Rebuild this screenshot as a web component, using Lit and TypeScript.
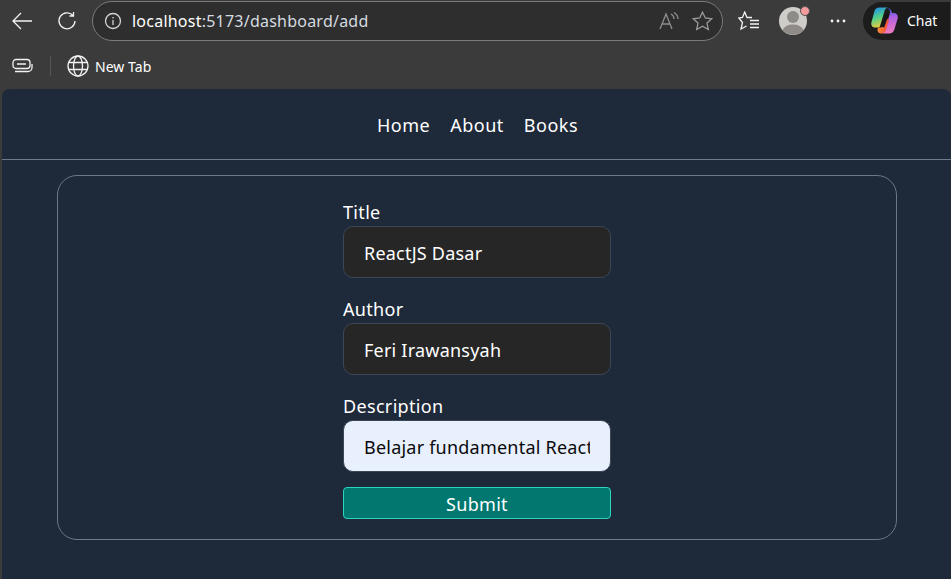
import { LitElement, html, css, svg } from "lit";
import { customElement } from "lit/decorators.js";

const stroke = (w: number, h: number, body: unknown, cls = "") => html`<svg class=${cls} width=${w} height=${h} viewBox="0 0 ${w} ${h}" fill="none" stroke="currentColor" stroke-width="1.3">${body}</svg>`;

@customElement("app-root")
export class AppRoot extends LitElement {
  static styles = css`
    :host { display: block; width: 951px; height: 579px; overflow: hidden; background: #3b3b3b; font-family: "Noto Sans", "Open Sans", sans-serif; color: #fff; }
    svg { display: block; flex: none; }
    .toolbar { height: 44px; display: flex; align-items: center; padding-left: 11px; box-sizing: border-box; padding-bottom: 3px; }
    .back { color: #f2f2f2; margin-right: 23px; }
    .reload { color: #f2f2f2; margin-right: 15px; margin-left: 1px; }
    .address { flex: none; width: 631px; height: 40px; box-sizing: border-box; border: 1px solid #7a7a7a; border-radius: 20px; background: #2e2e2e; display: flex; align-items: center; padding: 0 9px 0 11px; }
    .address .info { color: #d4d4d4; margin-right: 10px; }
    .url { flex: 1; font: 16px "Noto Sans", sans-serif; letter-spacing: 0.23px; color: #d5dbe0; white-space: nowrap; }
    .url b { font-weight: 400; color: #fff; }
    .read { color: #8f8f8f; margin-right: 13px; }
    .star { color: #9a9a9a; }
    .favs { color: #f2f2f2; margin-left: 15px; margin-right: 19px; }
    .avatar { position: relative; margin-right: 23px; width: 28px; height: 28px; flex: none; }
    .badge { position: absolute; right: -3px; top: -1px; width: 8px; height: 8px; border-radius: 50%; background: #f59b9b; border: 1px solid #555; }
    .dots { color: #f2f2f2; margin-right: 17px; }
    .chat { flex: none; width: 87px; height: 38px; border-radius: 19px 0 0 19px; background: #1c1c1c; display: flex; align-items: center; padding-left: 8px; box-sizing: border-box; gap: 9px; font: 14px "Noto Sans", sans-serif; }
    .bookmarks { height: 44px; display: flex; align-items: center; padding-left: 12px; box-sizing: border-box; font-size: 14px; letter-spacing: 0.05px; }
    .tabs-icon { color: #f2f2f2; }
    .sep { width: 1px; height: 20px; background: #555; margin: 0 16px 0 17px; }
    .globe { color: #f2f2f2; margin-right: 6px; }
    .content { margin: 1px 0 0 2px; height: 490px; background: #1e2939; border-radius: 8px 8px 0 0; box-sizing: border-box; }
    nav { height: 71px; box-sizing: border-box; border-bottom: 1px solid #6f7c90; display: flex; justify-content: center; align-items: center; gap: 20px; font-size: 18px; letter-spacing: 0.5px; padding: 2px 0 0 2px; }
    .card { width: 840px; height: 365px; box-sizing: border-box; margin: 15px 0 0 55px; border: 1px solid #6a788c; border-radius: 20px; padding: 24px 0 0 285px; }
    form { width: 268px; display: flex; flex-direction: column; }
    label { font-size: 18px; line-height: 24px; height: 26px; letter-spacing: 0.33px; }
    input { height: 52px; box-sizing: border-box; border: 1px solid #3d4656; border-radius: 10px; background: #262626; color: #fff; padding: 2px 20px 0 20px; font: 18px "Noto Sans", sans-serif; margin: 0 0 19px; letter-spacing: 0.22px; outline: none; width: 100%; }
    input.filled { background: #e8f0fe; color: #0a0a0a; margin-bottom: 15px; }
    button { height: 32px; box-sizing: border-box; border: 1px solid #2dd4bf; border-radius: 4px; background: #00786f; color: #fff; font: 18px/28px "Noto Sans", sans-serif; letter-spacing: 0.3px; padding: 1px 0 0; }
  `;

  render() {
    return html`
      <div class="toolbar">
        ${stroke(22, 18, svg`<path d="M21 9H2M10 1 2 9l8 8"/>`, "back")}
        ${stroke(20, 20, svg`<path d="M16 4.500A8 8 0 1 0 18 10M16.500 1v4h-4"/>`, "reload")}
        <div class="address">
          ${stroke(18, 18, svg`<circle cx="9" cy="9" r="7.500"/><path d="M9 8v5M9 5v1.500"/>`, "info")}
          <div class="url"><b>localhost</b>:5173/dashboard/add</div>
          ${stroke(20, 18, svg`<path d="M1 17 7 2l6 15M3 12h8M12 2c2 1 3 3 3 5M15 0.500c2.500 1.500 4 4 4 6.500"/>`, "read")}
          ${stroke(21, 20, svg`<path d="m10.500 1.200 2.800 5.800 6.400.8-4.700 4.300 1.300 6.400-5.800-3.200-5.800 3.200 1.300-6.400L1.300 7.800 7.700 7z"/>`, "star")}
        </div>
        ${stroke(22, 20, svg`<path d="M14 6.500H9L6.700 1 4.500 6.500 .8 7l3.700 4.500L3 18l5.500-3M12 9.500h9M12 13h9M12 16.500h9"/>`, "favs")}
        <div class="avatar">
          <svg width="28" height="28" viewBox="0 0 28 28"><circle cx="14" cy="14" r="14" fill="#cfcdc9"/><circle cx="14" cy="10" r="6" fill="#8e8b88"/><path d="M3.500 23a11 8 0 0 1 21 0 14 14 0 0 1-21 0z" fill="#8e8b88"/></svg>
          <span class="badge"></span>
        </div>
        <svg class="dots" width="16" height="4" viewBox="0 0 16 4" fill="currentColor"><circle cx="2" cy="2" r="1.400"/><circle cx="8" cy="2" r="1.400"/><circle cx="14" cy="2" r="1.400"/></svg>
        <div class="chat">
          <svg width="27" height="27" viewBox="0 0 27 27">
            <defs>
              <linearGradient id="a" x1="0.2" y1="0" x2="0.5" y2="1"><stop offset="0" stop-color="#1f8fe8"/><stop offset=".5" stop-color="#4fd08a"/><stop offset="1" stop-color="#f4cc3a"/></linearGradient>
              <linearGradient id="b" x1="0.5" y1="0" x2="0.5" y2="1"><stop offset="0" stop-color="#2f5fd8"/><stop offset=".35" stop-color="#b060e0"/><stop offset="1" stop-color="#f07cc0"/></linearGradient>
              <linearGradient id="c" x1="0" y1="0" x2="1" y2="0.200"><stop offset="0" stop-color="#f5a030"/><stop offset="1" stop-color="#f0483c"/></linearGradient>
            </defs>
            <path d="M8 .500H17C15 1 14 2 13.500 4L9 19C8.500 20 8 20.500 6 20.500H4C1 20.500-.3 18 .5 15L3.500 4C4 2 6 .5 8 .5z" fill="url(#a)"/>
            <path d="M16 1C19 1 20.500 3 21 6H23C26 6 27.500 9 26.500 12L23.500 22C23 25 20.500 26.500 18 26.500H10C12 26.500 13.500 25 14 23L19 6C19.500 4 18 1 16 1z" fill="url(#b)"/>
            <path d="M7 20.500H10C11.500 20.500 12 19.500 12.500 18L15 11 18 13 15 23C14.500 25 12.500 26.500 10 26.500 8 26.500 6.500 25 6.500 23z" fill="url(#c)"/>
            <path d="M16.500 7 12 20" stroke="#141414" stroke-width="2.500" fill="none"/>
          </svg>
          <span>Chat</span>
        </div>
      </div>
      <div class="bookmarks">
        ${stroke(21, 16, svg`<rect x="1" y="1.500" width="17" height="9" rx="3"/><path d="M5 6h9M3 13.500h13a4 4 0 0 0 4-4V6"/>`, "tabs-icon")}
        <span class="sep"></span>
        ${stroke(22, 22, svg`<circle cx="11" cy="11" r="10"/><ellipse cx="11" cy="11" rx="4.500" ry="10"/><path d="M1.500 7.500h19M1.500 14.500h19"/>`, "globe")}
        <span>New Tab</span>
      </div>
      <div class="content">
        <nav><span>Home</span><span>About</span><span>Books</span></nav>
        <div class="card">
          <form>
            <label>Title</label>
            <input type="text" .value=${"ReactJS Dasar"} />
            <label>Author</label>
            <input type="text" .value=${"Feri Irawansyah"} />
            <label>Description</label>
            <input class="filled" type="text" .value=${"Belajar fundamental ReactJS"} />
            <button type="button">Submit</button>
          </form>
        </div>
      </div>
    `;
  }
}
